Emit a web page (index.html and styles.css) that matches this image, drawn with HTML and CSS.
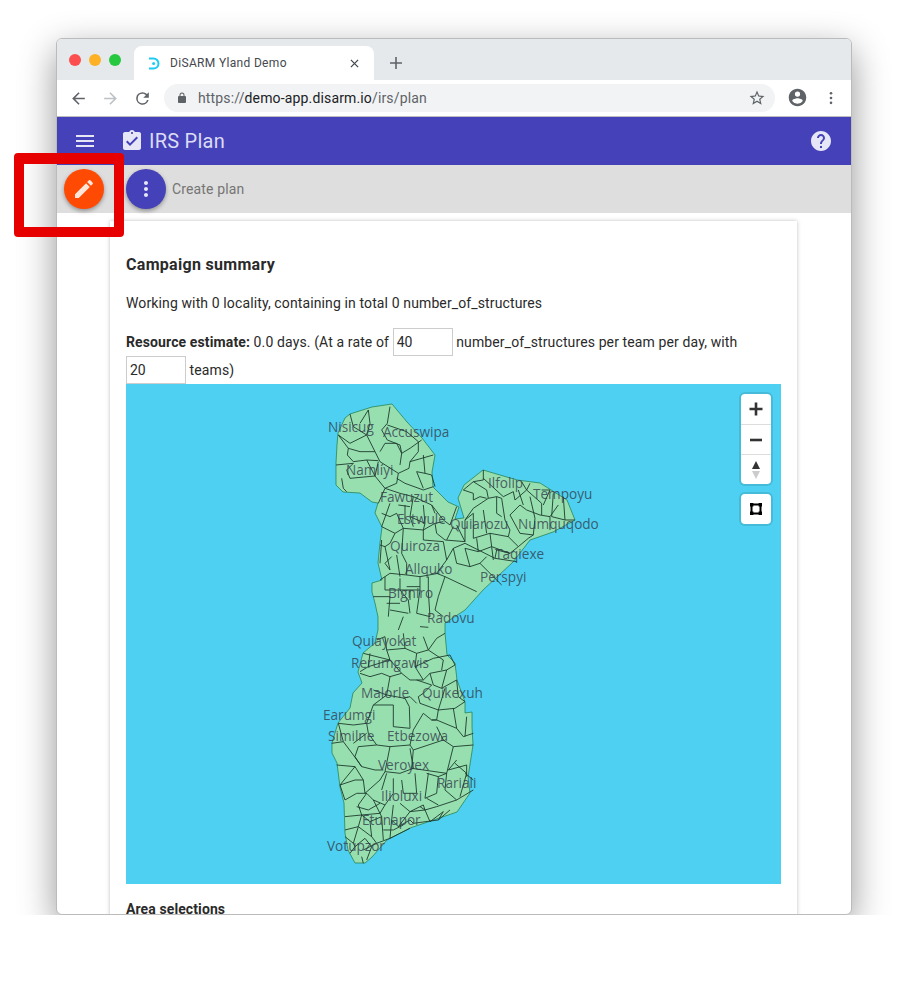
FILE: index.html
```html
<!DOCTYPE html>
<html>
<head>
    <meta charset="UTF-8">
    <title>DiSARM Yland Demo</title>
    <link rel="stylesheet" href="styles.css">
</head>
<body>
<div class="Shot">
    <div class="Window">
        <div class="TabStrip">
            <div class="Lights"><i class="Red"></i><i class="Amber"></i><i class="Green"></i></div>
            <div class="Tab">
                <svg class="Favicon" viewBox="0 0 12 13"><path d="M1 1.5h4.5a5 5 0 0 1 0 10H1" fill="none" stroke="#1CCBF5" stroke-width="2"/><circle cx="5.6" cy="6.5" r="1.5" fill="#1CCBF5"/></svg>
                <span class="TabTitle">DiSARM Yland Demo</span>
                <svg class="TabClose" viewBox="0 0 10 10"><path d="M1 1l8 8M9 1l-8 8" stroke="#45484d" stroke-width="1.4"/></svg>
            </div>
            <svg class="NewTab" viewBox="0 0 12 12"><path d="M6 0v12M0 6h12" stroke="#5f6368" stroke-width="1.6"/></svg>
        </div>
        <div class="Toolbar">
            <svg class="NavIcon" viewBox="0 0 24 24"><path fill="#5f6368" d="M20 11H7.83l5.59-5.59L12 4l-8 8 8 8 1.41-1.41L7.83 13H20v-2z"/></svg>
            <svg class="NavIcon" viewBox="0 0 24 24"><path fill="#bdc1c6" d="M4 11h12.17l-5.59-5.59L12 4l8 8-8 8-1.41-1.41L16.17 13H4v-2z"/></svg>
            <svg class="NavIcon" viewBox="0 0 24 24"><path fill="#5f6368" d="M17.65 6.35A7.96 7.96 0 0 0 12 4a8 8 0 1 0 7.73 10h-2.08A6 6 0 1 1 12 6c1.66 0 3.14.69 4.22 1.78L13 11h7V4l-2.35 2.35z"/></svg>
            <div class="Omnibox">
                <svg class="Lock" viewBox="0 0 24 24"><path fill="#5f6368" d="M18 8h-1V6A5 5 0 0 0 7 6v2H6a2 2 0 0 0-2 2v10c0 1.1.9 2 2 2h12a2 2 0 0 0 2-2V10a2 2 0 0 0-2-2zM9 6a3 3 0 0 1 6 0v2H9V6z"/></svg>
                <span class="Url">https://<b>demo-app.disarm.io</b>/irs/plan</span>
                <svg class="Star" viewBox="0 0 24 24"><path fill="#5f6368" d="M22 9.24l-7.19-.62L12 2 9.19 8.63 2 9.24l5.46 4.73L5.82 21 12 17.27 18.18 21l-1.63-7.03L22 9.24zM12 15.4l-3.76 2.27 1-4.28-3.32-2.88 4.38-.38L12 6.1l1.71 4.04 4.38.38-3.32 2.88 1 4.28L12 15.4z"/></svg>
            </div>
            <svg class="Account" viewBox="0 0 24 24"><path fill="#5f6368" d="M12 2C6.48 2 2 6.48 2 12s4.48 10 10 10 10-4.48 10-10S17.52 2 12 2zm0 3a3 3 0 1 1 0 6 3 3 0 0 1 0-6zm0 14.2a7.2 7.2 0 0 1-6-3.22c.03-1.99 4-3.08 6-3.08s5.97 1.09 6 3.08a7.2 7.2 0 0 1-6 3.22z"/></svg>
            <svg class="ChromeMenu" viewBox="0 0 4 16"><circle cx="2" cy="2.5" r="1.5"/><circle cx="2" cy="8" r="1.5"/><circle cx="2" cy="13.5" r="1.5"/></svg>
        </div>
        <div class="AppBar">
            <svg class="Burger" viewBox="0 0 24 24"><path d="M3 18h18v-2H3v2zm0-5h18v-2H3v2zm0-7v2h18V6H3z"/></svg>
            <svg class="Clipboard" viewBox="0 0 24 24"><path d="M19 3h-4.18C14.4 1.84 13.3 1 12 1c-1.3 0-2.4.84-2.82 2H5c-1.1 0-2 .9-2 2v14c0 1.1.9 2 2 2h14c1.1 0 2-.9 2-2V5c0-1.1-.9-2-2-2zm-7 0c.55 0 1 .45 1 1s-.45 1-1 1-1-.45-1-1 .45-1 1-1zm-2 14l-4-4 1.41-1.41L10 14.17l6.59-6.59L18 9l-8 8z"/></svg>
            <span class="AppTitle">IRS Plan</span>
            <svg class="Help" viewBox="0 0 24 24"><path d="M12 2C6.48 2 2 6.48 2 12s4.48 10 10 10 10-4.48 10-10S17.52 2 12 2zm1 17h-2v-2h2v2zm2.07-7.75l-.9.92C13.45 12.9 13 13.5 13 15h-2v-.5c0-1.1.45-2.1 1.17-2.83l1.24-1.26c.37-.36.59-.86.59-1.41 0-1.1-.9-2-2-2s-2 .9-2 2H8c0-2.21 1.79-4 4-4s4 1.79 4 4c0 .88-.36 1.68-.93 2.25z"/></svg>
        </div>
        <div class="SubBar">
            <div class="Fab Orange"><svg viewBox="0 0 24 24"><path d="M3 17.25V21h3.75L17.81 9.94l-3.75-3.75L3 17.25zM20.71 7.04c.39-.39.39-1.02 0-1.41l-2.34-2.34c-.39-.39-1.02-.39-1.41 0l-1.83 1.83 3.75 3.75 1.83-1.83z"/></svg></div>
            <div class="Fab Purple"><svg viewBox="0 0 24 24"><path d="M12 8c1.1 0 2-.9 2-2s-.9-2-2-2-2 .9-2 2 .9 2 2 2zm0 2c-1.1 0-2 .9-2 2s.9 2 2 2 2-.9 2-2-.9-2-2-2zm0 6c-1.1 0-2 .9-2 2s.9 2 2 2 2-.9 2-2-.9-2-2-2z"/></svg></div>
            <span class="SubLabel">Create plan</span>
        </div>
        <div class="Content">
            <div class="Card">
                <h1>Campaign summary</h1>
                <p class="Working">Working with 0 locality, containing in total 0 number_of_structures</p>
                <p class="Estimate"><b>Resource estimate:</b> 0.0 days. (At a rate of <input type="text" value="40"> number_of_structures per team per day, with <input type="text" value="20"> teams)</p>
                <div class="Map">
                    <svg class="MapSvg" viewBox="126 384 655 500">
                        <path class="Land" d="M392 404L372 407L350 414L345 418L338 433L337 445L336 463L336 485L343 492L360 493L372 502L378 503L375 513L382 527L380 543L378 563L382 580L372 583L372 592L375 603L378 617L378 630L375 643L363 653L358 672L362 683L353 693L350 708L338 723L332 743L332 753L337 763L340 787L344 803L345 833L348 850L355 863L365 863L372 857L387 840L410 828L457 812L470 793L468 777L473 745L472 727L472 712L465 713L465 702L457 680L455 663L447 655L445 633L445 623L465 610L483 590L513 562L530 540L553 532L575 520L567 500L540 483L517 480L483 470L464 485L458 498L464 518L455 519L459 507L448 502L433 487L432 472L435 455L422 438L407 422Z"/>
                        <g transform="translate(310 390) scale(.3333)">
                            <path class="Borders" d="M175 60L180 100L170 135L195 185L210 215M240 50L232 100L215 120L232 150L270 165L275 190L300 175L335 150M85 135L120 160L170 135M232 105L290 125L325 155L325 185L300 215L297 235L265 250L210 215M115 175L150 185L195 185M115 175L112 195L130 215L170 210L205 212M210 185L225 160L260 160L275 190L270 225M78 225L130 220L110 240L120 265L195 258L205 215M95 265L100 295L110 305M195 258L225 295L260 280L265 250M260 265L285 280L340 300L370 290M300 215L370 195M320 245L345 250L365 255M320 245L340 295M225 295L205 340M225 295L270 310L310 320L365 345L375 370M240 340L215 410M310 320L300 380L310 410M260 370L280 415M265 345L300 350M365 345L400 390L420 405L440 350M215 410L255 430L280 415L340 420L375 400L400 395M340 420L340 450L400 455M375 400L380 430L405 450M255 430L240 460L225 470L210 465M280 415L275 490L290 520M225 470L240 540M260 495L270 560M400 455L410 510L430 475L465 460L555 505L620 515M405 450L465 455M430 410L410 450M440 405L465 455M465 390L465 455M490 370L490 445L540 430L595 440M520 360L530 430M465 475L480 530L510 520L530 500M510 520L575 585M410 510L380 550L405 560L500 605M405 560L385 620L375 660M290 520L290 555L330 560L385 550M240 550L210 570M225 560L225 600L270 600L330 600L330 560M190 620L240 620L235 680M270 565L270 600L295 630L300 670M330 600L320 670M295 670L240 660M355 605L360 680M375 660L400 680M320 670L360 680M265 720L280 680M330 710L355 712"/>
                            <path class="Borders" d="M150 100L175 60M120 72L130 110L170 135M85 135L115 175M170 210L195 258M340 195L345 250M365 255L375 290M285 345L285 400M340 345L345 400L340 420M215 370L240 380L260 370M300 380L345 400M215 450L210 520M245 500L225 520L240 540M290 555L240 550M300 600L300 630M270 640L230 640M355 560L355 605M290 590L330 590"/>
                            <path class="Borders" d="M490 275L460 300L490 310L490 330L510 320L530 325M520 240L520 270L490 275M490 275L530 300L535 325L560 320L575 325M535 325L490 355L465 390L490 370M520 265L580 320L610 305L615 330L650 300L660 280M635 275L650 300L695 340L695 375M575 325L585 390L600 420L595 440L625 470L655 445M540 430L545 470L600 490L625 470M600 375L630 345L650 360L690 375M600 375L630 430L670 435M690 375L720 380L720 420M720 300L700 345M760 320L765 390L795 390M730 310L725 380L765 390M600 490L560 480L555 505"/>
                            <path class="Borders" d="M545 470L550 510M500 445L505 485L465 475M505 485L545 470M430 475L440 520L480 530M560 320L560 370L575 380M660 320L675 385L670 435M625 300L640 345M695 300L720 300M670 435L655 445M720 380L745 345"/>
                        </g>
                        <g transform="translate(310 630) scale(.3333)">
                            <path class="Borders" d="M225 20L230 60L240 90L160 70M285 55L320 70L355 60L380 25L405 10M320 70L315 110L370 85L420 75M230 60L285 55M150 130L180 140L215 130L240 140L275 130L300 150L340 150L360 130L410 120L435 105M360 130L370 165L395 175L440 150M320 150L365 165L340 190L325 200L330 220L385 240L435 235L465 215M190 225L250 225L250 290L300 295L298 230L285 205L230 195L190 225M190 180L230 195M280 205L300 200L320 220M190 225L170 280L175 310L200 345L240 350L300 345L310 300L340 250L365 270L380 270L385 240M85 280L130 285L170 280M365 270L380 270L440 295L460 320L490 310M440 295L430 235M470 260L465 320M65 340L100 335L130 375L155 410L195 420L220 420M300 345L310 360L400 330L430 350L490 345M400 330L380 290M145 350L200 345M145 350L135 380L155 410M240 350L225 425M300 355L310 415L270 430L225 425M310 360L305 415L410 430L430 350"/>
                            <path class="Borders" d="M80 405L135 410L160 450L165 490L210 450L225 425M135 410L90 465L135 450L160 450M250 445L250 490M275 450L280 490L320 490L315 430M410 430L405 480L440 510L490 480M345 505L355 430M440 390L415 420L470 405L470 440M435 400L470 430L450 500M90 465L105 510L140 490L170 490L190 510L225 525L250 490M170 490L145 525L155 555L145 590L185 620L200 640M105 560L155 555L210 550L225 525M190 510L215 560L220 630M250 525L245 570L240 625M270 520L300 545L265 590M330 530L345 540L380 530L440 510M300 545L345 540L360 575L400 545M310 580L385 570L420 540M145 590L105 600M135 650L165 625L185 650L170 690M155 680L160 700"/>
                            <path class="Borders" d="M140 530L175 540L210 520M155 555L180 575L215 560M180 575L185 620M245 570L265 590L300 570L310 580M200 640L240 625L300 595M145 590L130 640L135 650M220 600L250 600L280 585M345 540L340 525L300 545M385 570L400 545M160 660L200 640M120 670L135 650M105 620L130 640M350 505L385 525M230 430L215 480M100 335L85 280M170 310L130 340M350 430L385 440L410 430M385 440L380 490L345 505M465 430L490 450M200 30L225 20M280 10L285 55M340 20L355 60L400 90L395 120M420 75L435 105M180 70L175 110L150 125M175 110L240 90L275 130M315 110L340 150M240 140L230 195M410 120L395 175M440 150L445 200L465 215M385 240L405 175"/>
                        </g>
                        <g class="Labels">
                            <text x="328" y="432">Nisicug</text>
                            <text x="383" y="437">Accuswipa</text>
                            <text x="346" y="475">Namlíyi</text>
                            <text x="380" y="502">Fawuzut</text>
                            <text x="397" y="524">Estwule</text>
                            <text x="450" y="529">Quiarozu</text>
                            <text x="518" y="529">Numquqodo</text>
                            <text x="488" y="488">Ilfolip</text>
                            <text x="533" y="499">Tempoyu</text>
                            <text x="390" y="551">Quiroza</text>
                            <text x="495" y="559">Taqiexe</text>
                            <text x="405" y="574">Allquko</text>
                            <text x="480" y="582">Perspyi</text>
                            <text x="388" y="598">Bigniro</text>
                            <text x="427" y="623">Radovu</text>
                            <text x="352" y="646">Quiayokat</text>
                            <text x="351" y="668">Rerumgawis</text>
                            <text x="361" y="698">Malorle</text>
                            <text x="422" y="698">Quikexuh</text>
                            <text x="323" y="720">Earumgi</text>
                            <text x="328" y="741">Similne</text>
                            <text x="387" y="741">Etbezowa</text>
                            <text x="378" y="770">Veroyex</text>
                            <text x="437" y="788">Rariali</text>
                            <text x="381" y="801">Ilioluxi</text>
                            <text x="362" y="825">Etunapor</text>
                            <text x="327" y="851">Votupzor</text>
                        </g>
                    </svg>
                    <div class="MapCtrl Zoom">
                        <div class="CtrlBtn"><svg viewBox="0 0 14 14"><path d="M7 .5v13M.5 7h13" stroke="#333" stroke-width="2.6"/></svg></div>
                        <div class="CtrlBtn"><svg viewBox="0 0 14 14"><path d="M1 7h12" stroke="#333" stroke-width="2.6"/></svg></div>
                        <div class="CtrlBtn"><svg class="Compass" viewBox="0 0 14 20"><path d="M7 1l4 8H3z" fill="#333"/><path d="M7 19l4-8H3z" fill="#ccc"/></svg></div>
                    </div>
                    <div class="MapCtrl Draw">
                        <div class="CtrlBtn"><svg viewBox="0 0 14 14"><path d="M2.5 2.5h9v9h-9z" fill="none" stroke="#000" stroke-width="2"/><path d="M1 1h3.4v3.4H1zM9.6 1H13v3.4H9.6zM1 9.6h3.4V13H1zM9.6 9.6H13V13H9.6z" fill="#000"/></svg></div>
                    </div>
                </div>
                <h2>Area selections</h2>
            </div>
        </div>
    </div>
    <div class="Highlight"></div>
</div>
</body>
</html>
```

FILE: styles.css
```css
body{margin: 0;background-color: #FFF;font-family: Roboto,"Liberation Sans",sans-serif;}
svg{display: block;}
.Shot{position: relative;height: 915px;overflow: hidden;padding: 38px 0 0 56px;box-sizing: border-box;}
.Window{width: 796px;height: 877px;box-sizing: border-box;border: 1px solid #BBB;border-radius: 6px;overflow: hidden;background-color: #FFF;box-shadow: 0 12px 36px rgba(0,0,0,.42);display: flex;flex-direction: column;}
.Highlight{position: absolute;left: 14px;top: 153px;width: 110px;height: 84px;box-sizing: border-box;border: 10px solid #E60000;border-top-width: 11px;border-radius: 4px;}

.TabStrip{height: 41px;flex: none;display: flex;align-items: flex-end;background-color: #E6E9EC;}
.Lights{display: flex;gap: 8px;align-self: flex-start;padding: 15px 0 0 12px;width: 65px;box-sizing: border-box;}
.Lights i{display: block;width: 12px;height: 12px;border-radius: 50%;}
.Red{background-color: #FC4E4E;}
.Amber{background-color: #FDB226;}
.Green{background-color: #26C83F;}
.Tab{width: 240px;height: 34px;margin-left: 12px;box-sizing: border-box;padding: 0 15px 0 14px;display: flex;align-items: center;background-color: #FFF;border-radius: 8px 8px 0 0;}
.Favicon{width: 12px;height: 13px;}
.TabTitle{margin-left: 10px;font-size: 12px;letter-spacing: .33px;color: #45484D;flex: 1;}
.TabClose{width: 9px;height: 9px;}
.NewTab{width: 12px;height: 12px;margin: 0 0 11px 16px;}

.Toolbar{height: 37px;flex: none;box-sizing: border-box;display: flex;align-items: center;padding: 0 0 0 12px;background-color: #FFF;border-bottom: 1px solid #BDBDBD;}
.NavIcon{width: 19px;height: 19px;margin-right: 13px;}
.Omnibox{width: 611px;height: 28px;margin: -1px 0 0 -1px;box-sizing: border-box;padding: 0 9px 0 12px;display: flex;align-items: center;border-radius: 14px;background-color: #F1F3F4;}
.Lock{width: 12px;height: 12px;}
.Url{margin-left: 10px;flex: 1;font-size: 14px;letter-spacing: .15px;color: #5F6368;}
.Url b{font-weight: 400;color: #202124;}
.Star{width: 18px;height: 18px;}
.Account{width: 21px;height: 21px;margin: -1px 0 0 12px;}
.ChromeMenu{width: 4px;height: 14px;margin: -1px 0 0 21px;fill: #5F6368;}

.AppBar{height: 48px;flex: none;display: flex;align-items: center;box-sizing: border-box;padding: 0 18px 0 16px;background-color: #4542B9;}
.AppBar svg{fill: #E6E6F7;}
.Burger{width: 24px;height: 24px;}
.Clipboard{width: 24px;height: 24px;margin-left: 23px;}
.AppTitle{margin-left: 5px;flex: 1;font-size: 20px;letter-spacing: .25px;color: #DCDCF4;}
.Help{width: 24px;height: 24px;}

.SubBar{height: 48px;flex: none;display: flex;align-items: center;padding-left: 7px;background-color: #DEDEDE;}
.Fab{width: 40px;height: 40px;border-radius: 50%;display: flex;align-items: center;justify-content: center;box-shadow: 0 2px 4px rgba(0,0,0,.35);}
.Fab svg{width: 24px;height: 24px;}
.Orange{background-color: #FF4A04;fill: #FFE6D8;}
.Purple{margin-left: 22px;background-color: #4542B9;fill: #E6E6F7;}
.SubLabel{margin-left: 6px;font-size: 14px;letter-spacing: .15px;color: #757575;}

.Content{flex: 1;min-height: 0;padding: 8px 0 0 53px;}
.Card{width: 687px;height: 720px;box-sizing: border-box;padding: 16px;background-color: #FFF;box-shadow: 0 0 4px rgba(0,0,0,.25);color: #2A2A2A;font-size: 14px;letter-spacing: .12px;}
.Card h1{margin: 18px 0 0;font-size: 16px;line-height: 19px;font-weight: 700;letter-spacing: .3px;}
.Working{margin: 19px 0 0;line-height: 20px;}
.Estimate{margin: 15px 0 0;line-height: 28px;}
.Estimate input{width: 60px;height: 28px;box-sizing: border-box;margin: 0;padding: 0 3px;vertical-align: bottom;border: 1px solid #CCC;background-color: #FFF;font: inherit;color: inherit;}
.Map{position: relative;width: 655px;height: 500px;background-color: #4DD0F2;}
.MapSvg{width: 655px;height: 500px;}
.Land{fill: #98DFB0;stroke: #1E7A45;stroke-width: .7;}
.Borders{fill: none;stroke: #1C3A2C;stroke-width: 2.7;stroke-linejoin: round;}
.Labels text{font-family: "Open Sans",sans-serif;font-size: 13.6px;letter-spacing: 0;fill: rgba(50,60,75,.8);}
.MapCtrl{position: absolute;left: 615px;width: 30px;border-radius: 4px;background-color: #FFF;box-shadow: 0 0 0 2px rgba(0,0,0,.1);}
.Zoom{top: 10px;}
.Draw{top: 110px;}
.CtrlBtn{height: 30px;display: flex;align-items: center;justify-content: center;border-top: 1px solid #DDD;box-sizing: border-box;}
.CtrlBtn:first-child{border-top: 0;}
.CtrlBtn svg{width: 14px;height: 14px;}
.CtrlBtn .Compass{width: 14px;height: 20px;}
.Card h2{margin: 16px 0 0;font-size: 14px;line-height: 18px;font-weight: 700;letter-spacing: .1px;}
```
